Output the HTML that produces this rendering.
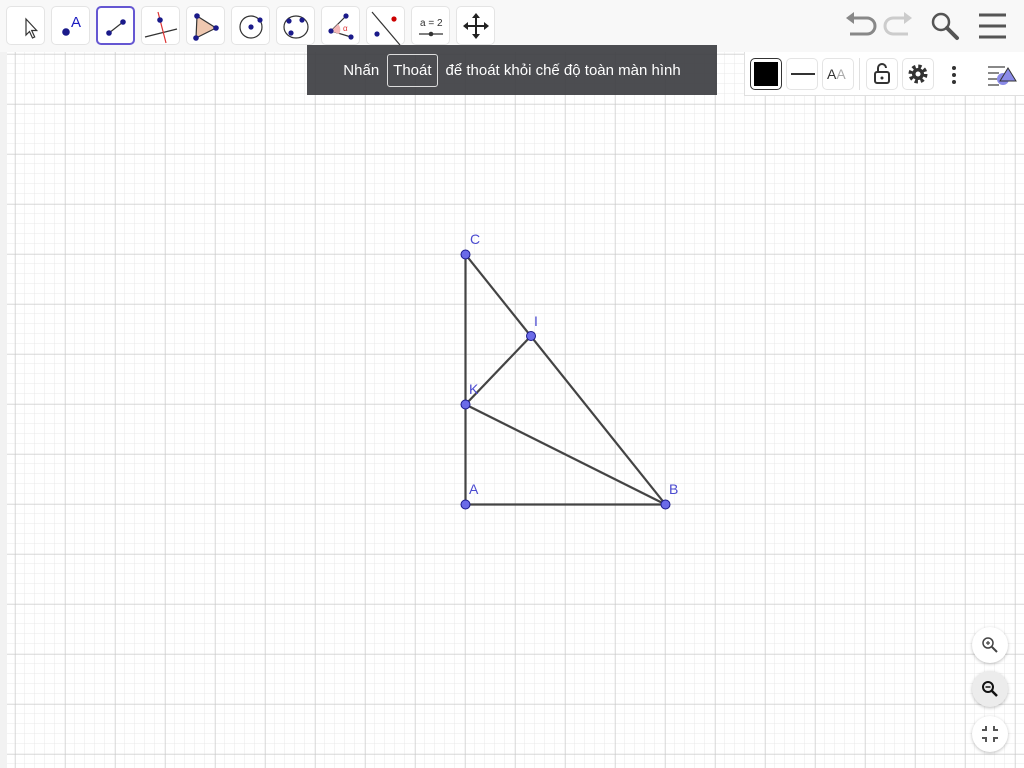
<!DOCTYPE html>
<html><head><meta charset="utf-8"><style>
*{margin:0;padding:0;box-sizing:border-box}
body{width:1024px;height:768px;overflow:hidden;background:#fff;font-family:"Liberation Sans","DejaVu Sans",sans-serif;position:relative}
.tb{position:absolute;left:0;top:0;width:1024px;height:52px;background:#f8f8f8}
.btn{position:absolute;top:6px;width:39px;height:39px;background:#fff;border:1px solid #e4e4e4;border-radius:5px}
.btn svg{position:absolute;left:0;top:0}
.sel{border:2px solid #6557d2}
.tip{position:absolute;left:307px;top:45px;width:410px;height:50px;background:rgba(62,64,68,0.93);color:#fff;font-size:15px;display:flex;align-items:center;justify-content:center;gap:8px}
.tip span.k{border:1px solid #ddd;border-radius:3px;padding:7px 5px}
.sb{position:absolute;left:744px;top:52px;width:280px;height:44px;background:#fff;border-left:1px solid #e0e0e0;border-bottom:1px solid #e0e0e0}
.sbb{position:absolute;top:6px;width:32px;height:32px;border:1px solid #e4e4e4;border-radius:5px;background:#fff}
.z{position:absolute;left:972px;width:36px;height:36px;border-radius:50%;background:#fff;box-shadow:0 1px 3px rgba(0,0,0,.25)}
</style></head><body>
<svg width="1024" height="768" style="position:absolute;left:0;top:0">
<defs>
<pattern id="mi" x="5" y="4" width="10" height="10" patternUnits="userSpaceOnUse"><path d="M10 0V10M0 10H10" stroke="#e8e8e8" stroke-width="1" fill="none"/></pattern>
<pattern id="ma" x="15.5" y="4.5" width="50" height="50" patternUnits="userSpaceOnUse"><path d="M0 0V50M0 0H50" stroke="#c4c4c4" stroke-width="1" fill="none"/></pattern>
</defs>
<rect x="0" y="52" width="1024" height="716" fill="url(#mi)"/>
<rect x="0" y="52" width="1024" height="716" fill="url(#ma)"/>
<rect x="0" y="52" width="7" height="716" fill="#f2f2f2"/>
<g stroke="#444" stroke-width="2.2" fill="none">
<path d="M465.5 254.5L465.5 504.5L665.5 504.5Z"/><path d="M465.5 404.5L665.5 504.5"/><path d="M465.5 404.5L531 336"/>
</g>
<g fill="#6b6be8" stroke="#1a1a8a" stroke-width="1">
<circle cx="465.5" cy="254.5" r="4.5"/><circle cx="531" cy="336" r="4.5"/><circle cx="465.5" cy="404.5" r="4.5"/><circle cx="465.5" cy="504.5" r="4.5"/><circle cx="665.5" cy="504.5" r="4.5"/>
</g>
<g fill="#4a4ad0" font-size="14" font-family="Liberation Sans,sans-serif">
<text x="470" y="244">C</text><text x="534" y="326">I</text><text x="469" y="394">K</text><text x="469" y="494">A</text><text x="669" y="494">B</text>
</g>
</svg>
<div class="tb">
<div class="btn" style="left:6px"><svg width="38" height="38"><path d="M19 12v16l3.5-3.5 3 6.5 2.2-1-3-6.5h5z" fill="#fff" stroke="#333" stroke-width="1.2"/></svg></div>
<div class="btn" style="left:51px"><svg width="38" height="38"><circle cx="14" cy="25" r="3.8" fill="#1a1a8a"/><text x="19" y="20" fill="#1a1ac0" font-size="15" font-family="Liberation Sans">A</text></svg></div>
<div class="btn sel" style="left:96px"><svg width="36" height="36"><path d="M11 25L25 14" stroke="#333" stroke-width="1.2"/><circle cx="11" cy="25" r="2.8" fill="#1a1a8a"/><circle cx="25" cy="14" r="2.8" fill="#1a1a8a"/></svg></div>
<div class="btn" style="left:141px"><svg width="38" height="38"><path d="M3 30L35 22" stroke="#333" stroke-width="1.2"/><path d="M16 5L24 36" stroke="#d33" stroke-width="1.2"/><circle cx="18" cy="13" r="2.8" fill="#1a1a8a"/></svg></div>
<div class="btn" style="left:186px"><svg width="38" height="38"><path d="M10 9L29 21L9 31Z" fill="#efc8b0" stroke="#333" stroke-width="1.2"/><circle cx="10" cy="9" r="2.8" fill="#1a1a8a"/><circle cx="29" cy="21" r="2.8" fill="#1a1a8a"/><circle cx="9" cy="31" r="2.8" fill="#1a1a8a"/></svg></div>
<div class="btn" style="left:231px"><svg width="38" height="38"><circle cx="19" cy="20" r="11" fill="none" stroke="#333" stroke-width="1.2"/><circle cx="19" cy="20" r="2.6" fill="#1a1a8a"/><circle cx="28" cy="13" r="2.6" fill="#1a1a8a"/></svg></div>
<div class="btn" style="left:276px"><svg width="38" height="38"><ellipse cx="19" cy="20" rx="12" ry="11" fill="none" stroke="#333" stroke-width="1.2"/><circle cx="12" cy="14" r="2.6" fill="#1a1a8a"/><circle cx="25" cy="13" r="2.6" fill="#1a1a8a"/><circle cx="14" cy="26" r="2.6" fill="#1a1a8a"/></svg></div>
<div class="btn" style="left:321px"><svg width="38" height="38"><path d="M24 9L9 24L29 30" fill="none" stroke="#333" stroke-width="1.2"/><path d="M9 24L16 17A8 8 0 0 1 17 27Z" fill="#f4b8b8"/><circle cx="24" cy="9" r="2.6" fill="#1a1a8a"/><circle cx="9" cy="24" r="2.6" fill="#1a1a8a"/><circle cx="29" cy="30" r="2.6" fill="#1a1a8a"/><text x="21" y="24" font-size="8" fill="#d33">α</text></svg></div>
<div class="btn" style="left:366px"><svg width="38" height="38"><path d="M5 5L33 38" stroke="#333" stroke-width="1.2"/><circle cx="27" cy="12" r="2.6" fill="#c00"/><circle cx="10" cy="27" r="2.6" fill="#1a1a8a"/></svg></div>
<div class="btn" style="left:411px"><svg width="38" height="38"><text x="8" y="19" font-size="10" fill="#333" font-family="Liberation Sans">a = 2</text><path d="M7 27H31" stroke="#333" stroke-width="1.2"/><circle cx="19" cy="27" r="2.3" fill="#333"/></svg></div>
<div class="btn" style="left:456px"><svg width="38" height="38"><path d="M19 8V30M8 19H30" stroke="#222" stroke-width="2"/><path d="M19 6l-4 5h8zM19 32l-4-5h8zM6 19l5-4v8zM32 19l-5-4v8z" fill="#222"/></svg></div>
<svg width="200" height="52" style="position:absolute;left:830px;top:0">
<path d="M20 18H37a8 8 0 0 1 0 16H20" fill="none" stroke="#888" stroke-width="3"/><path d="M16 18l8-6v12z" fill="#888"/>
<path d="M78 18H63a8 8 0 0 0 0 16H78" fill="none" stroke="#ccc" stroke-width="3"/><path d="M82 18l-8-6v12z" fill="#ccc"/>
<circle cx="111" cy="22" r="8" fill="none" stroke="#555" stroke-width="2.5"/><path d="M117 28l10 10" stroke="#555" stroke-width="4" stroke-linecap="round"/>
<path d="M149 15H176M149 26H176M149 37H176" stroke="#555" stroke-width="3"/>
</svg>
</div>
<div class="tip">Nhấn <span class="k">Thoát</span> để thoát khỏi chế độ toàn màn hình</div>
<div class="sb">
<div class="sbb" style="left:5px;border:1px solid #333"><div style="position:absolute;left:3px;top:3px;width:24px;height:24px;background:#000"></div></div>
<div class="sbb" style="left:41px"><div style="position:absolute;left:4px;top:14px;width:24px;height:2px;background:#333"></div></div>
<div class="sbb" style="left:77px;font-size:14px;color:#333;padding:7px 0 0 4px">A<span style="color:#aaa">A</span></div>
<div style="position:absolute;left:114px;top:6px;width:1px;height:32px;background:#e0e0e0"></div>
<div class="sbb" style="left:121px"><svg width="30" height="30"><rect x="8" y="13" width="14" height="11" rx="2" fill="none" stroke="#333" stroke-width="2"/><path d="M11 13V9a4 4 0 0 1 8 0" fill="none" stroke="#333" stroke-width="2"/><circle cx="15" cy="19" r="1.5" fill="#333"/></svg></div>
<div class="sbb" style="left:157px"><svg width="30" height="30"><circle cx="15" cy="15" r="7" fill="none" stroke="#333" stroke-width="5" stroke-dasharray="3 2.5"/><circle cx="15" cy="15" r="6" fill="#333"/><circle cx="15" cy="15" r="2.5" fill="#fff"/></svg></div>
<svg width="10" height="30" style="position:absolute;left:204px;top:8px"><circle cx="5" cy="8" r="2" fill="#333"/><circle cx="5" cy="15" r="2" fill="#333"/><circle cx="5" cy="22" r="2" fill="#333"/></svg>
<svg width="40" height="30" style="position:absolute;left:240px;top:8px"><path d="M3 7H20M3 13H14M3 19H12M3 25H14" stroke="#888" stroke-width="2"/><circle cx="18" cy="19" r="6" fill="#8a8ae8"/><path d="M23 8l8 13H15z" fill="#8a8ae8" stroke="#333" stroke-width="1"/></svg>
</div>
<div class="z" style="top:627px"><svg width="36" height="36"><circle cx="16" cy="16" r="5" fill="none" stroke="#444" stroke-width="1.5"/><path d="M20 20l5 5" stroke="#444" stroke-width="2"/><path d="M14 16h4M16 14v4" stroke="#444" stroke-width="1.2"/></svg></div>
<div class="z" style="top:671px;background:#ececec"><svg width="36" height="36"><circle cx="16" cy="16" r="5" fill="none" stroke="#111" stroke-width="2"/><path d="M20 20l5 5" stroke="#111" stroke-width="2.5"/><path d="M13.5 16h5" stroke="#111" stroke-width="1.5"/></svg></div>
<div class="z" style="top:716px"><svg width="36" height="36"><path d="M14 10v4h-4M22 10v4h4M14 26v-4h-4M22 26v-4h4" fill="none" stroke="#555" stroke-width="2"/></svg></div>
</body></html>
